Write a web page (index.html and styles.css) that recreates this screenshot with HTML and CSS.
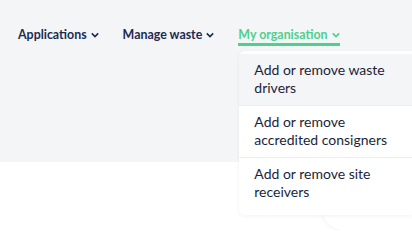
FILE: index.html
```html
<!DOCTYPE html>
<html lang="en">
<head>
    <meta charset="UTF-8">
    <meta name="viewport" content="width=device-width, initial-scale=1.0">
    <title>Waste portal</title>
    <link rel="stylesheet" href="styles.css">
</head>
<body>
    <header class="top">
        <nav class="nav">
            <div class="nav-item">
                <span>Applications</span>
                <svg class="chev" viewBox="0 0 10 6" width="8" height="6"><path d="M1 1l4 4 4-4" fill="none" stroke="currentColor" stroke-width="2"/></svg>
            </div>
            <div class="nav-item">
                <span>Manage waste</span>
                <svg class="chev" viewBox="0 0 10 6" width="8" height="6"><path d="M1 1l4 4 4-4" fill="none" stroke="currentColor" stroke-width="2"/></svg>
            </div>
            <div class="nav-item active">
                <span>My organisation</span>
                <svg class="chev" viewBox="0 0 10 6" width="8" height="6"><path d="M1 1l4 4 4-4" fill="none" stroke="currentColor" stroke-width="2"/></svg>
                <ul class="dropdown">
                    <li class="current">Add or remove waste drivers</li>
                    <li>Add or remove accredited consigners</li>
                    <li>Add or remove site receivers</li>
                </ul>
            </div>
        </nav>
    </header>
    <main class="content">
        <div class="card"></div>
    </main>
</body>
</html>
```

FILE: styles.css
```css
body {
    margin: 0;
    font-family: Lato, "Noto Sans", sans-serif;
    background-color: #fff;
    color: #1c2446;
    overflow: hidden;
}

.top {
    background-color: #f4f5f7;
    height: 162px;
}

.nav {
    display: flex;
    gap: 24px;
    padding: 26px 0 0 18px;
}

.nav-item {
    position: relative;
    display: flex;
    align-items: center;
    gap: 4px;
    font-size: 12.4px;
    font-weight: 700;
    color: #1d2b50;
    height: 17px;
}

.nav-item.active {
    color: #4fd08c;
    border-bottom: 3px solid #4fd08c;
}

.chev {
    margin-top: 1px;
}

.dropdown {
    position: absolute;
    top: 25px;
    left: 1px;
    width: 173px;
    margin: 0;
    padding: 3px 0 0;
    list-style: none;
    background-color: #fff;
    border-radius: 6px 0 0 6px;
    box-shadow: 0 1px 4px rgba(0, 0, 0, 0.06);
    font-weight: 400;
    font-size: 14px;
    line-height: 18px;
    color: #1b1f3b;
    z-index: 2;
}

.dropdown li {
    padding: 7px 8px 8px 15px;
    border-top: 1px solid #eceef1;
    min-height: 36px;
}

.dropdown li:first-child {
    border-top: none;
}

.dropdown li:last-child {
    padding-bottom: 14px;
}

.dropdown li.current {
    background-color: #f4f5f7;
}

.content {
    padding-left: 322px;
}

.card {
    height: 68px;
    background-color: #fff;
    border-radius: 0 0 0 22px;
    box-shadow: 0 1px 6px rgba(0, 0, 0, 0.05);
}
```
